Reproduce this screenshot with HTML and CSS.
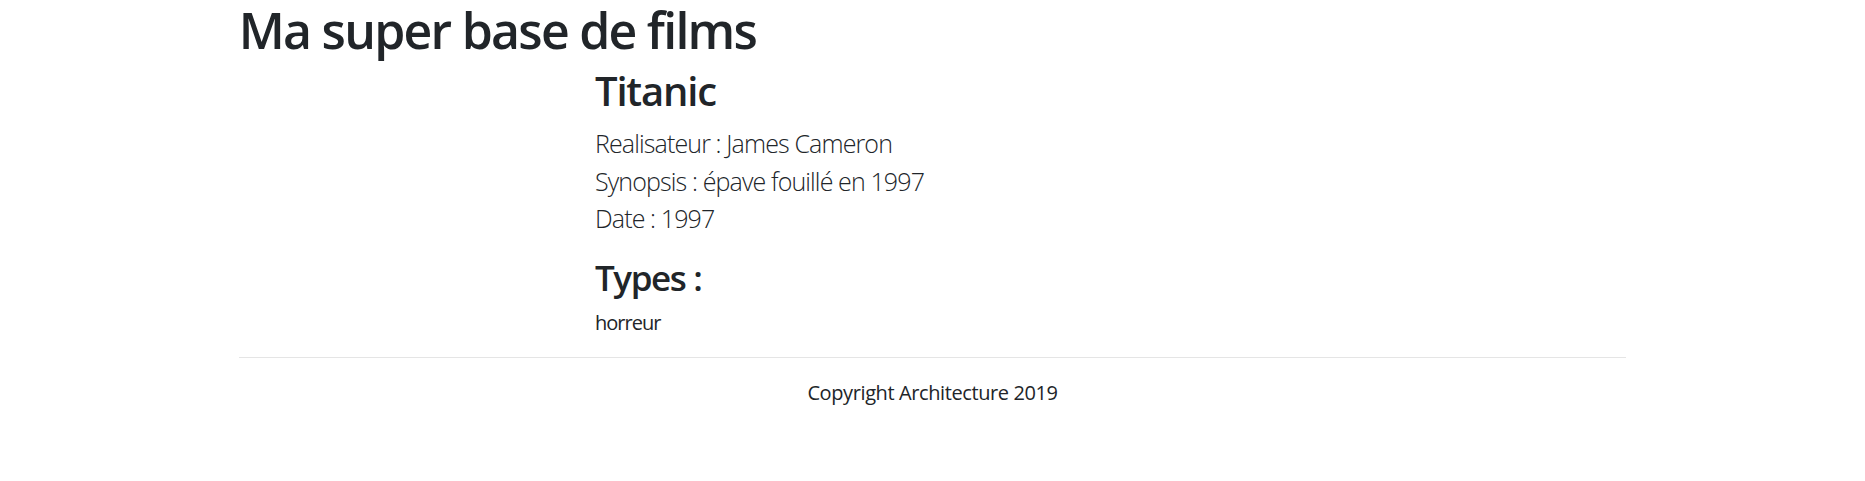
FILE: index.html
```html
<!DOCTYPE html>
<html lang="fr">
<head>
<meta charset="utf-8">
<title>Ma super base de films</title>
<link rel="stylesheet" href="styles.css">
</head>
<body>
<div class="container">
  <h1 class="title">Ma super base de films</h1>
  <div class="row">
    <div class="col-side"></div>
    <div class="col-main">
      <h2 class="film-title">Titanic</h2>
      <div class="details">
        <p class="lead">Realisateur : James Cameron</p>
        <p class="lead">Synopsis : épave fouillé en 1997</p>
        <p class="lead">Date : 1997</p>
      </div>
      <h3 class="types-title">Types :</h3>
      <div class="types">horreur</div>
    </div>
  </div>
  <hr class="sep">
  <footer class="footer">
    <p class="copyright">Copyright Architecture 2019</p>
  </footer>
</div>
</body>
</html>
```
FILE: styles.css
```css
html {
  font-size: 20px;
}
body {
  margin: 0;
  font-family: "Open Sans", "Noto Sans", "Liberation Sans", sans-serif;
  font-size: 20px;
  line-height: 1.5;
  color: #212529;
  background: #fff;
  letter-spacing: -0.02em;
}
.container {
  max-width: 1425px;
  margin: 0 auto;
  padding: 0 18.75px;
  box-sizing: border-box;
}
.title {
  font-size: 50px;
  font-weight: 600;
  line-height: 1.2;
  letter-spacing: -0.035em;
  margin: 0 0 7px;
}
.row {
  display: flex;
  margin: 0 -18.75px;
}
.col-side {
  flex: 0 0 25%;
  padding: 0 18.75px;
  box-sizing: border-box;
}
.col-main {
  flex: 0 0 75%;
  padding: 0 18.75px;
  box-sizing: border-box;
}
.film-title {
  font-size: 40px;
  font-weight: 600;
  line-height: 1.2;
  letter-spacing: -0.03em;
  margin: 0 0 10px;
}
.details {
  margin-bottom: 19px;
}
.lead {
  font-size: 25px;
  font-weight: 300;
  letter-spacing: -0.035em;
  margin: 0;
}
.types-title {
  font-size: 35px;
  font-weight: 600;
  line-height: 1.2;
  letter-spacing: -0.04em;
  margin: 0 0 9px;
}
.types {
  font-size: 20px;
  letter-spacing: -0.05em;
}
.sep {
  margin: 19px 0 20px;
  border: 0;
  border-top: 1.25px solid rgba(0, 0, 0, 0.1);
}
.copyright {
  text-align: center;
  margin: 0;
}
```
